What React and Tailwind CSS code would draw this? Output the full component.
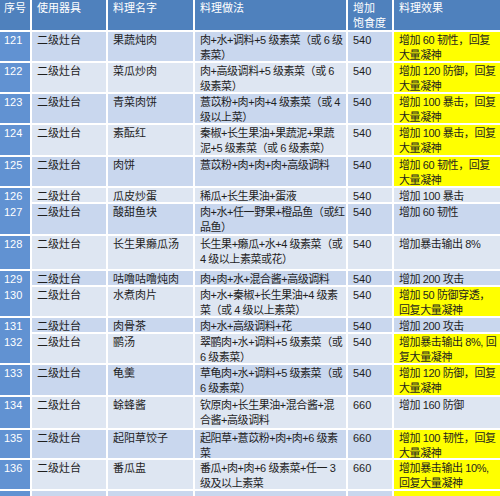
import React from "react";

const rows = [
  { n: "121", name: "果蔬炖肉", m: ["肉+水+调料+5 级素菜（或 6 级", "素菜）"], s: "540", e: ["增加 60 韧性，回复", "大量凝神"], y: true, h: "h-[31px]" },
  { n: "122", name: "菜瓜炒肉", m: ["肉+高级调料+5 级素菜（或 6", "级素菜）"], s: "540", e: ["增加 120 防御，回复", "大量凝神"], y: true, h: "h-[31px]" },
  { n: "123", name: "青菜肉饼", m: ["薏苡粉+肉+肉+4 级素菜（或 4", "级以上菜）"], s: "540", e: ["增加 100 暴击，回复", "大量凝神"], y: true, h: "h-[31px]" },
  { n: "124", name: "素酝红", m: ["秦椒+长生果油+果蔬泥+果蔬", "泥+5 级素菜（或 6 级素菜）"], s: "540", e: ["增加 100 暴击，回复", "大量凝神"], y: true, h: "h-[32px]" },
  { n: "125", name: "肉饼", m: ["薏苡粉+肉+肉+肉+高级调料"], s: "540", e: ["增加 60 韧性，回复", "大量凝神"], y: true, h: "h-[31px]" },
  { n: "126", name: "瓜皮炒蛋", m: ["稀瓜+长生果油+蛋液"], s: "540", e: ["增加 100 暴击"], y: false, h: "h-[16px]" },
  { n: "127", name: "酸甜鱼块", m: ["肉+水+任一野果+橙品鱼（或红", "品鱼）"], s: "540", e: ["增加 60 韧性"], y: false, h: "h-[32px]" },
  { n: "128", name: "长生果癞瓜汤", m: ["长生果+癞瓜+水+4 级素菜（或", "4 级以上素菜或花）"], s: "540", e: ["增加暴击输出 8%"], y: false, h: "h-[35px]" },
  { n: "129", name: "咕噜咕噜炖肉", m: ["肉+肉+水+混合酱+高级调料"], s: "540", e: ["增加 200 攻击"], y: false, h: "h-[16px]" },
  { n: "130", name: "水煮肉片", m: ["肉+水+秦椒+长生果油+4 级素", "菜（或 4 级以上素菜）"], s: "540", e: ["增加 50 防御穿透，", "回复大量凝神"], y: true, h: "h-[31px]" },
  { n: "131", name: "肉骨茶", m: ["肉+水+高级调料+花"], s: "540", e: ["增加 200 攻击"], y: false, h: "h-[16px]" },
  { n: "132", name: "鹂汤", m: ["翠鹂肉+水+调料+5 级素菜（或", "6 级素菜）"], s: "540", e: ["增加暴击输出 8%, 回", "复大量凝神"], y: true, h: "h-[31px]" },
  { n: "133", name: "龟羹", m: ["草龟肉+水+调料+5 级素菜（或", "6 级素菜）"], s: "540", e: ["增加 120 防御，回复", "大量凝神"], y: true, h: "h-[32px]" },
  { n: "134", name: "蜍蜂酱", m: ["钦原肉+长生果油+混合酱+混", "合酱+高级调料"], s: "660", e: ["增加 160 防御"], y: false, h: "h-[33px]" },
  { n: "135", name: "起阳草饺子", m: ["起阳草+薏苡粉+肉+肉+6 级素", "菜"], s: "660", e: ["增加 100 韧性，回复", "大量凝神"], y: true, h: "h-[30px]" },
  { n: "136", name: "番瓜盅", m: ["番瓜+肉+肉+6 级素菜+任一 3", "级及以上素菜"], s: "660", e: ["增加暴击输出 10%,", "回复大量凝神"], y: true, h: "h-[31px]" },
];

const grid = "grid grid-cols-[32px_76px_87px_153px_46px_106px] border-b-2 border-white";
const cell = "border-r-2 border-white pl-[5px] pt-[1px] overflow-hidden whitespace-nowrap";

function Lines({ lines }) {
  return lines.map((l, i) => <div key={i}>{l}</div>);
}

export default function App() {
  return (
    <div className="w-[500px] h-[496px] overflow-hidden bg-white font-['Liberation_Sans','Noto_Sans_CJK_SC',sans-serif] text-[11px] leading-[15px] text-[#1e1e1e]">
      <div className={`${grid} h-[32px] bg-[#4f81bd] text-white`}>
        <div className="border-r-2 border-white pl-[4px] pt-[1px] whitespace-nowrap">序号</div>
        <div className={cell}>使用器具</div>
        <div className={cell}>料理名字</div>
        <div className={cell}>料理做法</div>
        <div className={cell}>
          <div>增加</div>
          <div>饱食度</div>
        </div>
        <div className="pl-[5px] pt-[1px] whitespace-nowrap">料理效果</div>
      </div>
      {rows.map((r, i) => {
        const bg = i % 2 === 0 ? "bg-[#c9d7ee]" : "bg-[#dee6f2]";
        return (
          <div key={r.n} className={`${grid} ${r.h} ${bg}`}>
            <div className="border-r-2 border-white bg-[#6192d2] text-white pl-[4px] pt-[1px]">{r.n}</div>
            <div className={cell}>二级灶台</div>
            <div className={cell}>{r.name}</div>
            <div className={`${cell} tracking-[-0.45px]`}>
              <Lines lines={r.m} />
            </div>
            <div className={cell}>{r.s}</div>
            <div className={`pl-[5px] pt-[1px] overflow-hidden whitespace-nowrap tracking-[-0.4px] ${r.y ? "bg-[#ffff00]" : ""}`}>
              <Lines lines={r.e} />
            </div>
          </div>
        );
      })}
      <div className={`${grid} h-[31px] bg-[#c9d7ee]`}>
        <div className="border-r-2 border-white bg-[#6192d2]"></div>
        <div className="border-r-2 border-white"></div>
        <div className="border-r-2 border-white"></div>
        <div className="border-r-2 border-white"></div>
        <div className="border-r-2 border-white"></div>
        <div className="bg-[#ffff00]"></div>
      </div>
    </div>
  );
}
